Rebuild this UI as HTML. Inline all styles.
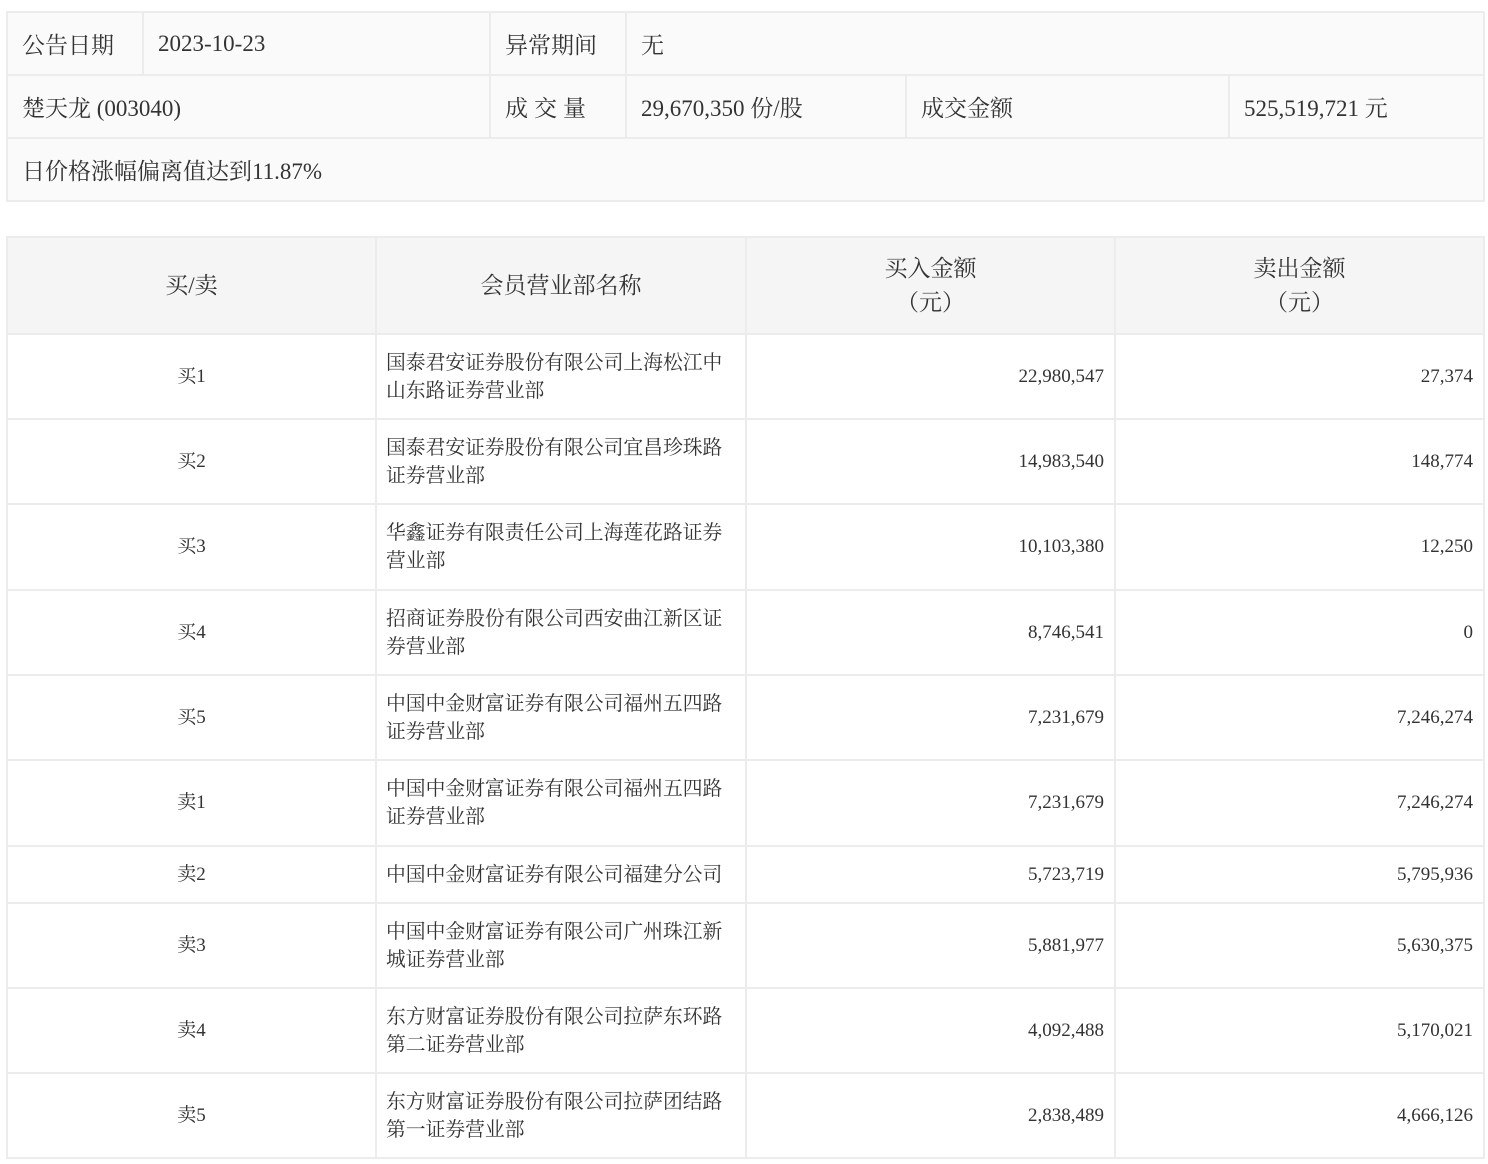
<!DOCTYPE html>
<html><head><meta charset="utf-8"><style>
body{margin:0;background:#fff;width:1488px;height:1164px;overflow:hidden;font-family:"Liberation Serif","Noto Serif CJK SC",serif;color:#333;}
table{border-collapse:collapse;position:absolute;left:6px;table-layout:fixed;}
td{border:2px solid #ececec;box-sizing:border-box;}
#t1{top:11px;width:1477px;background:#fafafa;font-size:23px;}
#t1 td{height:63px;padding:0 0 0 14px;}
#t2{top:236px;width:1477px;font-size:19px;}
#t2 td{padding:0 10px;line-height:28px;}
#t2 td.n{font-size:19.8px;white-space:nowrap;overflow:hidden;padding:0 4px 0 9px;}
#t2 tr.h td{background:#f5f5f5;text-align:center;font-size:23px;height:97px;line-height:34px;}
.c{text-align:center}.r{text-align:right}
</style></head><body>
<table id="t1">
<colgroup><col style="width:136px"><col style="width:347px"><col style="width:136px"><col style="width:280px"><col style="width:323px"><col style="width:255px"></colgroup>
<tr><td>公告日期</td><td>2023-10-23</td><td>异常期间</td><td colspan="3">无</td></tr>
<tr><td colspan="2">楚天龙 (003040)</td><td style="letter-spacing:6px">成交量</td><td>29,670,350 份/股</td><td>成交金额</td><td>525,519,721 元</td></tr>
<tr><td colspan="6">日价格涨幅偏离值达到11.87%</td></tr>
</table>
<table id="t2">
<colgroup><col style="width:369px"><col style="width:370px"><col style="width:369px"><col style="width:369px"></colgroup>
<tr class="h"><td>买/卖</td><td>会员营业部名称</td><td>买入金额<br>（元）</td><td>卖出金额<br>（元）</td></tr>
<tr style="height:85px"><td class="c">买1</td><td class="n">国泰君安证券股份有限公司上海松江中<br>山东路证券营业部</td><td class="r">22,980,547</td><td class="r">27,374</td></tr>
<tr style="height:85px"><td class="c">买2</td><td class="n">国泰君安证券股份有限公司宜昌珍珠路<br>证券营业部</td><td class="r">14,983,540</td><td class="r">148,774</td></tr>
<tr style="height:86px"><td class="c">买3</td><td class="n">华鑫证券有限责任公司上海莲花路证券<br>营业部</td><td class="r">10,103,380</td><td class="r">12,250</td></tr>
<tr style="height:85px"><td class="c">买4</td><td class="n">招商证券股份有限公司西安曲江新区证<br>券营业部</td><td class="r">8,746,541</td><td class="r">0</td></tr>
<tr style="height:85px"><td class="c">买5</td><td class="n">中国中金财富证券有限公司福州五四路<br>证券营业部</td><td class="r">7,231,679</td><td class="r">7,246,274</td></tr>
<tr style="height:86px"><td class="c">卖1</td><td class="n">中国中金财富证券有限公司福州五四路<br>证券营业部</td><td class="r">7,231,679</td><td class="r">7,246,274</td></tr>
<tr style="height:57px"><td class="c">卖2</td><td class="n">中国中金财富证券有限公司福建分公司</td><td class="r">5,723,719</td><td class="r">5,795,936</td></tr>
<tr style="height:85px"><td class="c">卖3</td><td class="n">中国中金财富证券有限公司广州珠江新<br>城证券营业部</td><td class="r">5,881,977</td><td class="r">5,630,375</td></tr>
<tr style="height:85px"><td class="c">卖4</td><td class="n">东方财富证券股份有限公司拉萨东环路<br>第二证券营业部</td><td class="r">4,092,488</td><td class="r">5,170,021</td></tr>
<tr style="height:85px"><td class="c">卖5</td><td class="n">东方财富证券股份有限公司拉萨团结路<br>第一证券营业部</td><td class="r">2,838,489</td><td class="r">4,666,126</td></tr>
</table>
</body></html>
